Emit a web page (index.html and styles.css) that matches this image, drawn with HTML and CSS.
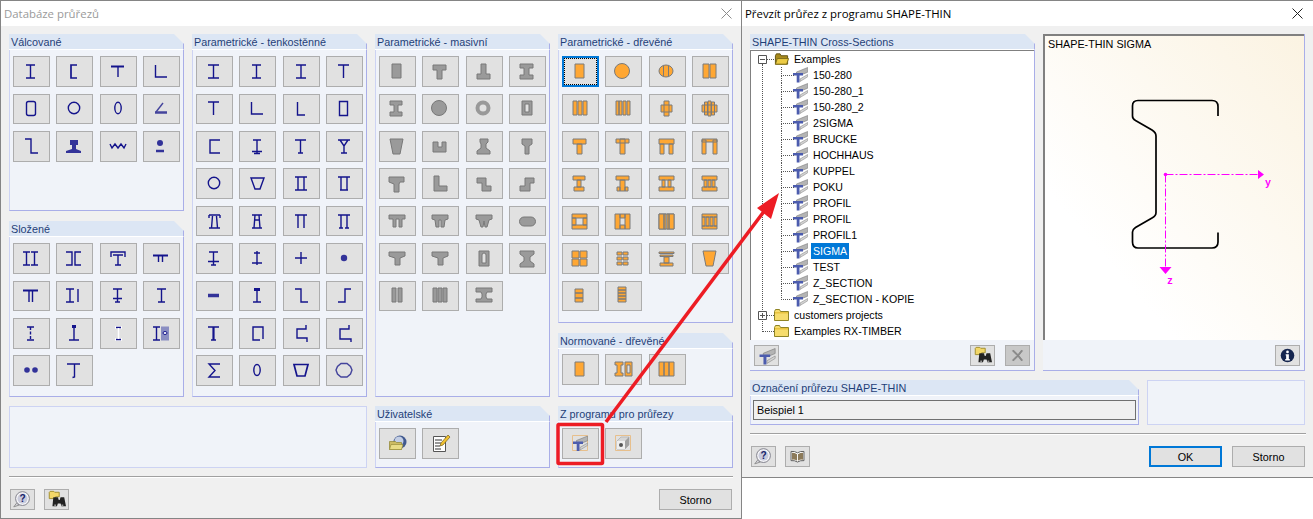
FILE: index.html
```html
<!DOCTYPE html>
<html>
<head>
<meta charset="UTF-8">
<title>Databáze průřezů</title>
<link rel="stylesheet" href="styles.css">
</head>
<body>
<svg class="sprite">
  <symbol id="sec" viewBox="0 0 15 16">
    <path fill="#b4b4b4" stroke="#7c7c7c" stroke-width=".6" d="M3.500 5 14.700.5v4.700L9 7.500H3.500z"/>
    <path fill="#d4d4d4" stroke="#8c8c8c" stroke-width=".6" d="M7 12l7.700-4.500v2.300L7 14.500z"/>
    <path fill="#4c5cae" d="M0 6h10v2.400H6.500V15.500H3.700V8.400H0z"/>
  </symbol>
  <symbol id="folder" viewBox="0 0 15 12">
    <path fill="#f6dc6c" stroke="#8f8426" d="M.5 2.500l1-2h4l1 2h8v9H.5z"/>
    <path fill="#e8c23e" d="M1 3h13v1.500H1z"/>
  </symbol>
  <symbol id="folder-open" viewBox="0 0 16 12">
    <path fill="#a88a1c" stroke="#5f5010" d="M1.500 11.500v-9l1-2h4l1 2h7v9z"/>
    <path fill="#eccb44" stroke="#7d6c18" d="M1.500 11.500l2-6h12l-2 6z"/>
  </symbol>
  <symbol id="help" viewBox="0 0 25 20">
    <path fill="#d8d8e0" stroke="#8a8a8a" d="M6 14 3 18l6-2z"/>
    <circle cx="12.500" cy="9" r="7.500" fill="#f6f6f8" stroke="#7a7a86"/>
    <circle cx="12.500" cy="9" r="5.500" fill="#c9cbdc"/>
    <text x="12.500" y="13" text-anchor="middle" class="help-mark">?</text>
  </symbol>
  <symbol id="find" viewBox="0 0 25 21">
    <path fill="#f3d768" stroke="#9c8a28" d="M4.500 9.500v-7l1-1h4l1 1h5v5h-4v2z"/>
    <path fill="#222" d="M9 8h5l1 3h1l1-3h4l2 10h-5l-1-3h-3l-1 3H8z"/>
    <path fill="#999" d="M10 16h2v2h-2zm8 0h2v2h-2z"/>
  </symbol>
</svg>

<div class="desk">

<div class="dialog db-dialog">
  <div class="titlebar muted"><span>Databáze průřezů</span><svg class="close" viewBox="0 0 11 11"><path d="M.5.5l10 10M10.500.5l-10 10"/></svg></div>
  <div class="upper">
    <div class="col">
      <section class="panel rolled">
        <h3>Válcované</h3>
        <div class="body tools steel">
          <button class="tool"><svg viewBox="0 0 37 31"><path d="M13 9h9M17.500 9v13M13 22h9"/></svg></button>
          <button class="tool"><svg viewBox="0 0 37 31"><path d="M21 9h-6v13h6" stroke-width="1.700"/></svg></button>
          <button class="tool"><svg viewBox="0 0 37 31"><path d="M11 10.500h13" stroke-width="2"/><path d="M18 10v11"/></svg></button>
          <button class="tool"><svg viewBox="0 0 37 31"><path d="M12.500 9v12H24"/></svg></button>
          <button class="tool"><svg viewBox="0 0 37 31"><rect x="13.500" y="8.500" width="9" height="14" rx="2"/></svg></button>
          <button class="tool"><svg viewBox="0 0 37 31"><circle cx="18" cy="15" r="5.700"/></svg></button>
          <button class="tool"><svg viewBox="0 0 37 31"><ellipse cx="18" cy="15" rx="3.200" ry="5.700"/></svg></button>
          <button class="tool"><svg viewBox="0 0 37 31"><path d="M12 19.500h12" stroke="#44449c" stroke-width="2.500"/><path d="M13 19l7-9" stroke="#44449c"/></svg></button>
          <button class="tool"><svg viewBox="0 0 37 31"><path d="M12 8h6v14h7"/></svg></button>
          <button class="tool"><svg viewBox="0 0 37 31"><path class="fill" d="M14 9h8v5h-2v4l5 2v2H10v-2l6-2v-4h-2z"/></svg></button>
          <button class="tool"><svg viewBox="0 0 37 31"><path d="M10 13l2 4 3-4 3 4 3-4 3 4 2-4"/></svg></button>
          <button class="tool"><svg viewBox="0 0 37 31"><circle class="fill" cx="17" cy="12" r="3"/><path d="M13 20h8" stroke="#333399" stroke-width="2.500"/></svg></button>
        </div>
      </section>
      <section class="panel composed">
        <h3>Složené</h3>
        <div class="body tools steel">
          <button class="tool"><svg viewBox="0 0 37 31"><path d="M10 9h7M13.500 9v13M10 22h7M18 9h7M21.500 9v13M18 22h7"/></svg></button>
          <button class="tool"><svg viewBox="0 0 37 31"><path d="M10 9h6v13h-6M25 9h-6v13h6"/></svg></button>
          <button class="tool"><svg viewBox="0 0 37 31"><path d="M11 14V9h14v5M13 12h10M18 12v10M15 22h6"/></svg></button>
          <button class="tool"><svg viewBox="0 0 37 31"><path d="M10 12.500h15" stroke-width="2"/><path d="M15.500 12v7M19.500 12v7"/></svg></button>
          <button class="tool"><svg viewBox="0 0 37 31"><path d="M10 10.500h15" stroke-width="2"/><path d="M16 10v12M19.500 10v12"/></svg></button>
          <button class="tool"><svg viewBox="0 0 37 31"><path d="M10 9h8M14 9v13M10 22h8M22 9v13"/></svg></button>
          <button class="tool"><svg viewBox="0 0 37 31"><path d="M13 9h9M17.500 9v13M13 18.500h9M15 22h5"/></svg></button>
          <button class="tool"><svg viewBox="0 0 37 31"><path d="M14 9h9M18.500 9v13M15 22h7"/></svg></button>
          <button class="tool"><svg viewBox="0 0 37 31"><path d="M14 9h7M14 22h7"/><path d="M17.500 9v13" stroke-dasharray="3 1.500"/></svg></button>
          <button class="tool"><svg viewBox="0 0 37 31"><path d="M16 8.500h4" stroke-width="3"/><path d="M18 9v13M13 22h10"/></svg></button>
          <button class="tool"><svg viewBox="0 0 37 31"><path d="M15 9.500h7M15 21.500h7" stroke="#fff" stroke-width="2.500"/><path d="M16 21.500h5M16 9.500h5"/><path d="M18.500 10v11" stroke="#fff" stroke-width="1.500"/></svg></button>
          <button class="tool"><svg viewBox="0 0 37 31"><path d="M10 9h7M10 22h7M13.500 9v13"/><rect x="18" y="8.500" width="8" height="14" fill="#8a8ec2" stroke="none"/><ellipse cx="22" cy="15" rx="2" ry="1.500" fill="#fff" stroke-width="1"/></svg></button>
          <button class="tool"><svg viewBox="0 0 37 31"><circle class="fill" cx="14" cy="15" r="2.800"/><circle class="fill" cx="22" cy="15" r="2.800"/></svg></button>
          <button class="tool"><svg viewBox="0 0 37 31"><path d="M11 9h13M18.500 9v13l-2 .5"/></svg></button>
        </div>
      </section>
    </div>

    <section class="panel full">
      <h3>Parametrické - tenkostěnné</h3>
      <div class="body tools steel">
        <button class="tool"><svg viewBox="0 0 37 31"><path d="M12 9h11M17.500 9v13M12 22h11"/></svg></button>
        <button class="tool"><svg viewBox="0 0 37 31"><path d="M13 9h9M17.500 9v13M13 22h9"/></svg></button>
        <button class="tool"><svg viewBox="0 0 37 31"><path d="M13 9h10M18 9v13M13 22h10"/></svg></button>
        <button class="tool"><svg viewBox="0 0 37 31"><path d="M12 9h11M17.500 9v13"/></svg></button>
        <button class="tool"><svg viewBox="0 0 37 31"><path d="M12 9h11M17.500 9v13"/></svg></button>
        <button class="tool"><svg viewBox="0 0 37 31"><path d="M12.500 9v12H24"/></svg></button>
        <button class="tool"><svg viewBox="0 0 37 31"><path d="M14.500 9v13H22"/></svg></button>
        <button class="tool"><svg viewBox="0 0 37 31"><path d="M13.500 8.500h8v14h-8z"/></svg></button>
        <button class="tool"><svg viewBox="0 0 37 31"><path d="M24 9H14v13h10"/></svg></button>
        <button class="tool"><svg viewBox="0 0 37 31"><path d="M14 9h8M18 9v13M13 20.500h10M15 22.500h6"/></svg></button>
        <button class="tool"><svg viewBox="0 0 37 31"><path d="M12 9h11M17.500 9v13M15 22h5"/></svg></button>
        <button class="tool"><svg viewBox="0 0 37 31"><path d="M12 9h12M14 9l4 6 4-6M18 15v7M15 22h6"/></svg></button>
        <button class="tool"><svg viewBox="0 0 37 31"><circle cx="18" cy="15" r="5.700"/></svg></button>
        <button class="tool"><svg viewBox="0 0 37 31"><path d="M12 10h13l-4 11h-5z"/></svg></button>
        <button class="tool"><svg viewBox="0 0 37 31"><path d="M12 9h12M12 22h12M15 9v13M21 9v13"/></svg></button>
        <button class="tool"><svg viewBox="0 0 37 31"><path d="M12 9h12M14 22h8M15 9v13M21 9v13"/></svg></button>
        <button class="tool"><svg viewBox="0 0 37 31"><path d="M13 9h11M13 22h11M15.500 22l1-12M21.500 22l-1-12M13 9v3M24 9v3"/></svg></button>
        <button class="tool"><svg viewBox="0 0 37 31"><path d="M13 9h10M13 22h10M15 22l1-13M21 22l-1-13M15 14h6"/></svg></button>
        <button class="tool"><svg viewBox="0 0 37 31"><path d="M12 9h12M15 9v13M21 9v13"/></svg></button>
        <button class="tool"><svg viewBox="0 0 37 31"><path d="M12 9h12M15 9v13M21 9v13M13 22h4M19 22h4"/></svg></button>
        <button class="tool"><svg viewBox="0 0 37 31"><path d="M13 9h9M17.500 9v13M12 18.500h11M15 22h5"/></svg></button>
        <button class="tool"><svg viewBox="0 0 37 31"><path d="M15 10h6M18 8v14M13 20h10"/></svg></button>
        <button class="tool"><svg viewBox="0 0 37 31"><path d="M12 15h12M18 9v12"/></svg></button>
        <button class="tool"><svg viewBox="0 0 37 31"><circle class="fill" cx="18" cy="15" r="3.200"/></svg></button>
        <button class="tool"><svg viewBox="0 0 37 31"><path d="M12 15.500h11" stroke="#333399" stroke-width="3.500"/></svg></button>
        <button class="tool"><svg viewBox="0 0 37 31"><path d="M15 9.500h6" stroke-width="3"/><path d="M18 9v13M14 22h8"/></svg></button>
        <button class="tool"><svg viewBox="0 0 37 31"><path d="M12 9h6v13h7"/></svg></button>
        <button class="tool"><svg viewBox="0 0 37 31"><path d="M12 22h7V9h6"/></svg></button>
        <button class="tool"><svg viewBox="0 0 37 31"><path d="M12 9h11M15 22h5"/><path d="M17.500 9v13" stroke-width="2.200"/></svg></button>
        <button class="tool"><svg viewBox="0 0 37 31"><path d="M21 22h-7V9h10v12"/></svg></button>
        <button class="tool"><svg viewBox="0 0 37 31"><path d="M23 7v4h-9v9h10v4"/></svg></button>
        <button class="tool"><svg viewBox="0 0 37 31"><path d="M23 7v4h-9v10h11v3"/></svg></button>
        <button class="tool"><svg viewBox="0 0 37 31"><path d="M24 9H13l6 6.500-6 6.500h11"/></svg></button>
        <button class="tool"><svg viewBox="0 0 37 31"><ellipse cx="18" cy="15" rx="3.200" ry="5.500"/></svg></button>
        <button class="tool"><svg viewBox="0 0 37 31"><path d="M11 9.500h14l-3 11.500h-8z" stroke-width="1.700"/></svg></button>
        <button class="tool"><svg viewBox="0 0 37 31"><path d="M15 8.500h6l3.500 3 1.500 3.500-1.500 4-3.500 3h-6l-3.500-3L10 15l1.500-3.500z" stroke="#44449c"/></svg></button>
      </div>
    </section>

    <section class="panel full">
      <h3>Parametrické - masivní</h3>
      <div class="body tools concrete">
        <button class="tool"><svg viewBox="0 0 37 31"><path d="M13 8h9v14h-9z"/></svg></button>
        <button class="tool"><svg viewBox="0 0 37 31"><path d="M11 9h13v5h-4v9h-5v-9h-4z"/></svg></button>
        <button class="tool"><svg viewBox="0 0 37 31"><path d="M15 8h5v10h4v5H11v-5h4z"/></svg></button>
        <button class="tool"><svg viewBox="0 0 37 31"><path d="M11 8h13v4h-4v7h4v4H11v-4h4v-7h-4z"/></svg></button>
        <button class="tool"><svg viewBox="0 0 37 31"><path d="M11 8h12v4h-4v7h4v4H11v-4h4v-7h-4z"/></svg></button>
        <button class="tool"><svg viewBox="0 0 37 31"><circle cx="17" cy="15" r="7.500"/></svg></button>
        <button class="tool"><svg viewBox="0 0 37 31"><circle cx="17" cy="15" r="5.500" fill="none" stroke="#999" stroke-width="4"/></svg></button>
        <button class="tool"><svg viewBox="0 0 37 31"><path fill-rule="evenodd" d="M13 8h10v14H13zm3 3v8h4v-8z"/></svg></button>
        <button class="tool"><svg viewBox="0 0 37 31"><path d="M11 8h13l-3 15h-7z"/></svg></button>
        <button class="tool"><svg viewBox="0 0 37 31"><path d="M11 11h5v5h4v-5h4v10H11z"/></svg></button>
        <button class="tool"><svg viewBox="0 0 37 31"><path d="M14 8h8v3l-2 2v4l4 3v3H11v-3l4-3v-4l-1-2z"/></svg></button>
        <button class="tool"><svg viewBox="0 0 37 31"><path d="M13 8h10v5l-3 2v8h-4v-8l-3-2z"/></svg></button>
        <button class="tool"><svg viewBox="0 0 37 31"><path d="M10 9h15v5h-4l-1 2v8h-5v-8l-5-2z"/></svg></button>
        <button class="tool"><svg viewBox="0 0 37 31"><path d="M12 8h5v10h8v5H12z"/></svg></button>
        <button class="tool"><svg viewBox="0 0 37 31"><path d="M11 10h9v8h5v5h-9v-8h-5z"/></svg></button>
        <button class="tool"><svg viewBox="0 0 37 31"><path d="M11 23v-5h5v-8h9v5h-4v8z"/></svg></button>
        <button class="tool"><svg viewBox="0 0 37 31"><path d="M10 9h16v4h-3v8h-3v-8h-3v8h-3v-8h-4z"/></svg></button>
        <button class="tool"><svg viewBox="0 0 37 31"><path d="M10 9h16v4l-3 1-1 7h-3v-7h-2v7h-3l-1-7-3-1z"/></svg></button>
        <button class="tool"><svg viewBox="0 0 37 31"><path d="M10 9h16v4l-3 1-2 7h-2l-1-6-1 6h-2l-2-7-3-1z"/></svg></button>
        <button class="tool"><svg viewBox="0 0 37 31"><rect x="10.500" y="11" width="16" height="9" rx="4.500"/></svg></button>
        <button class="tool"><svg viewBox="0 0 37 31"><path d="M10 9h16v4l-5 2v7h-5v-7l-6-2z"/></svg></button>
        <button class="tool"><svg viewBox="0 0 37 31"><path d="M10 9h16v4l-5 2v7h-5v-7l-6-2z"/></svg></button>
        <button class="tool"><svg viewBox="0 0 37 31"><path fill-rule="evenodd" d="M13 8h10v15H13zm3 4v8h4v-8a2 2 0 0 0-4 0z"/></svg></button>
        <button class="tool"><svg viewBox="0 0 37 31"><path d="M11 8h14v3l-4 3v4l4 3v3H11v-3l4-3v-4l-4-3z"/></svg></button>
        <button class="tool"><svg viewBox="0 0 37 31"><path d="M13 8h4v14h-4zM19 8h4v14h-4z"/></svg></button>
        <button class="tool"><svg viewBox="0 0 37 31"><path d="M11 8h4v14h-4zM16 8h4v14h-4zM21 8h4v14h-4z"/></svg></button>
        <button class="tool"><svg viewBox="0 0 37 31"><path d="M10 8h16v4h-5l-1 2v3l1 2h5v3H10v-3h5l1-2v-3l-1-2h-5z"/></svg></button>
      </div>
    </section>

    <div class="col">
      <section class="panel timber-panel">
        <h3>Parametrické - dřevěné</h3>
        <div class="body tools timber">
          <button class="tool focus"><svg viewBox="0 0 37 31"><path d="M13 8h9v14h-9z"/></svg></button>
          <button class="tool"><svg viewBox="0 0 37 31"><circle cx="17" cy="15" r="7.500"/></svg></button>
          <button class="tool"><svg viewBox="0 0 37 31"><ellipse cx="17" cy="15" rx="7" ry="6"/><path d="M14.500 9.500v11M19.500 9.500v11"/></svg></button>
          <button class="tool"><svg viewBox="0 0 37 31"><path d="M11 8h6v14h-6zM18 8h6v14h-6z"/></svg></button>
          <button class="tool"><svg viewBox="0 0 37 31"><path d="M11 8h4v14h-4zM16 8h4v14h-4zM21 8h4v14h-4z"/></svg></button>
          <button class="tool"><svg viewBox="0 0 37 31"><path d="M11 8h3v14h-3zM14 8h3v14h-3zM18 8h3v14h-3zM22 8h3v14h-3z"/></svg></button>
          <button class="tool"><svg viewBox="0 0 37 31"><path d="M12 12h11v7H12zM15 8h5v15h-5z"/></svg></button>
          <button class="tool"><svg viewBox="0 0 37 31"><path d="M10 12h15v7H10zM12.500 9h3v13h-3zM19.500 9h3v13h-3zM16 8h3v15h-3z"/></svg></button>
          <button class="tool"><svg viewBox="0 0 37 31"><path d="M11 8h13v5H11zM15 13h5v10h-5z"/></svg></button>
          <button class="tool"><svg viewBox="0 0 37 31"><path d="M11 8h13v4H11zM15 8h5v15h-5z"/></svg></button>
          <button class="tool"><svg viewBox="0 0 37 31"><path d="M10 8h15v5H10zM11 13h4v10h-4zM20 13h4v10h-4z"/></svg></button>
          <button class="tool"><svg viewBox="0 0 37 31"><path d="M10 9h4v14h-4zM21 9h4v14h-4zM10 8h15v3H10z"/></svg></button>
          <button class="tool"><svg viewBox="0 0 37 31"><path d="M11 8h12v4H11zM15 12h4v7h-4zM12 19h10v4H12z"/></svg></button>
          <button class="tool"><svg viewBox="0 0 37 31"><path d="M11 8h13v4H11zM15 12h5v11h-5zM12 19h3v4h-3zM20 19h3v4h-3z"/></svg></button>
          <button class="tool"><svg viewBox="0 0 37 31"><path d="M10 8h15v4H10zM13 12h3v7h-3zM19 12h3v7h-3zM10 19h15v4H10z"/></svg></button>
          <button class="tool"><svg viewBox="0 0 37 31"><path d="M10 8h15v4H10zM12 12h3v7h-3zM16 12h3v7h-3zM20 12h3v7h-3zM10 19h15v4H10z"/></svg></button>
          <button class="tool"><svg viewBox="0 0 37 31"><path d="M10 8h15v4H10zM10 12h4v7h-4zM21 12h4v7h-4zM10 19h15v4H10z"/></svg></button>
          <button class="tool"><svg viewBox="0 0 37 31"><path d="M10 8h5v15h-5zM20 8h5v15h-5zM15 8h5v4h-5zM15 19h5v4h-5z"/></svg></button>
          <button class="tool"><svg viewBox="0 0 37 31"><path d="M10 8h15v15H10z" fill="none"/><path d="M10 8h5v15h-5zM15 8h2v15h-2zM18 8h2v15h-2zM20 8h5v15h-5z"/></svg></button>
          <button class="tool"><svg viewBox="0 0 37 31"><path d="M10 8h15v3H10zM10 20h15v3H10zM10 11h3v9h-3zM14 11h3v9h-3zM18 11h3v9h-3zM22 11h3v9h-3z" /></svg></button>
          <button class="tool"><svg viewBox="0 0 37 31"><path d="M10 8h7v7h-7zM18 8h7v7h-7zM10 16h7v7h-7zM18 16h7v7h-7z"/></svg></button>
          <button class="tool"><svg viewBox="0 0 37 31"><path d="M12 9h5v3h-5zM18 9h5v3h-5zM12 14h5v3h-5zM18 14h5v3h-5zM12 19h5v3h-5zM18 19h5v3h-5z"/></svg></button>
          <button class="tool"><svg viewBox="0 0 37 31"><path d="M10 9h15v1.500H10zM11 12h13v1.500H11zM15 14h5v6h-5zM11 20h13v3H11z"/></svg></button>
          <button class="tool"><svg viewBox="0 0 37 31"><path d="M11 8h13l-3 15h-7z"/></svg></button>
          <button class="tool"><svg viewBox="0 0 37 31"><path d="M13 9h8v4h-8zM13 13h8v5h-8zM13 18h8v4h-8z"/></svg></button>
          <button class="tool"><svg viewBox="0 0 37 31"><path d="M13 7h8v3h-8zM13 10h8v3h-8zM13 13h8v3h-8zM13 16h8v3h-8zM13 19h8v3h-8z"/></svg></button>
        </div>
      </section>
      <section class="panel norm-panel">
        <h3>Normované - dřevěné</h3>
        <div class="body tools timber">
          <button class="tool"><svg viewBox="0 0 37 31"><path d="M13 8h9v14h-9z"/></svg></button>
          <button class="tool"><svg viewBox="0 0 37 31"><path d="M10 8h8v3h-2v8h2v3h-8v-3h2v-8h-2zM20 8h7v14h-7z"/><path class="hole" d="M22 11h3v8h-3z"/></svg></button>
          <button class="tool"><svg viewBox="0 0 37 31"><path d="M10 8h5v14h-5zM15 8h5v14h-5zM20 8h5v14h-5z"/></svg></button>
        </div>
      </section>
    </div>
  </div>

  <div class="lower">
    <section class="panel blank wide-blank"></section>
    <section class="panel short">
      <h3>Uživatelské</h3>
      <div class="body tools">
        <button class="tool"><svg viewBox="0 0 37 31"><circle cx="21" cy="14" r="6.500" fill="#41598f"/><circle cx="20" cy="13" r="4.500" fill="#c3cee4"/><path fill="#cdbb62" stroke="#8e8430" stroke-width=".7" d="M10.500 13.500h6l1 1h5v7h-12z"/><path fill="#e9dc86" stroke="#9a8f3c" stroke-width=".7" d="M10.500 21.500l1.500-5h12l-1.500 5z"/></svg></button>
        <button class="tool"><svg viewBox="0 0 37 31"><path fill="#fff" stroke="#555" d="M11.500 8.500h12v15h-12z"/><path stroke="#333" d="M13 12h7M13 15h6M13 18h5M13 21h6"/><path fill="#f2c230" stroke="#77601a" stroke-width=".7" d="M26 7l2 2-7 8-3 1 1-3z"/></svg></button>
      </div>
    </section>
    <section class="panel short">
      <h3>Z programu pro průřezy</h3>
      <div class="body tools">
        <button class="tool"><svg viewBox="0 0 37 31"><path fill="none" stroke="#e7bf8c" d="M10.500 7.500h15v15h-15z"/><use href="#sec" x="11" y="7.500" width="15" height="16"/></svg></button>
        <button class="tool"><svg viewBox="0 0 37 31"><path fill="none" stroke="#e7bf8c" d="M10.500 7.500h15v15h-15z"/><path fill="#d6d6d6" stroke="#999" stroke-width=".5" d="M12 13l4-4h8v8l-4 4h-8z"/><path fill="#a0a0a0" d="M20 13l4-4v8l-4 4z"/><path fill="#efefef" d="M12 13h8v8h-8z"/><circle cx="16" cy="17" r="2" fill="#555"/></svg></button>
      </div>
    </section>
  </div>

  <div class="rule"></div>
  <div class="foot">
    <button class="small"><svg><use href="#help"/></svg></button>
    <button class="small find-btn"><svg><use href="#find"/></svg></button>
    <button class="cmd push">Storno</button>
  </div>
</div>

<div class="dialog take-dialog">
  <div class="titlebar"><span>Převzít průřez z programu SHAPE-THIN</span><svg class="close dark" viewBox="0 0 11 11"><path d="M.5.5l10 10M10.500.5l-10 10"/></svg></div>
  <div class="split">
    <section class="panel tree-panel">
      <h3>SHAPE-THIN Cross-Sections</h3>
      <div class="body tree-body">
        <div class="tree">
          <div class="row root"><svg class="exp" viewBox="0 0 9 9"><path d="M.5.5h8v8h-8zM2 4.500h5"/></svg><i class="stub"></i><svg class="fold"><use href="#folder-open"/></svg><span>Examples</span></div>
          <div class="row leaf"><svg class="beam"><use href="#sec"/></svg><span>150-280</span></div>
          <div class="row leaf"><svg class="beam"><use href="#sec"/></svg><span>150-280_1</span></div>
          <div class="row leaf"><svg class="beam"><use href="#sec"/></svg><span>150-280_2</span></div>
          <div class="row leaf"><svg class="beam"><use href="#sec"/></svg><span>2SIGMA</span></div>
          <div class="row leaf"><svg class="beam"><use href="#sec"/></svg><span>BRUCKE</span></div>
          <div class="row leaf"><svg class="beam"><use href="#sec"/></svg><span>HOCHHAUS</span></div>
          <div class="row leaf"><svg class="beam"><use href="#sec"/></svg><span>KUPPEL</span></div>
          <div class="row leaf"><svg class="beam"><use href="#sec"/></svg><span>POKU</span></div>
          <div class="row leaf"><svg class="beam"><use href="#sec"/></svg><span>PROFIL</span></div>
          <div class="row leaf"><svg class="beam"><use href="#sec"/></svg><span>PROFIL</span></div>
          <div class="row leaf"><svg class="beam"><use href="#sec"/></svg><span>PROFIL1</span></div>
          <div class="row leaf"><svg class="beam"><use href="#sec"/></svg><span class="picked">SIGMA</span></div>
          <div class="row leaf"><svg class="beam"><use href="#sec"/></svg><span>TEST</span></div>
          <div class="row leaf"><svg class="beam"><use href="#sec"/></svg><span>Z_SECTION</span></div>
          <div class="row leaf last"><svg class="beam"><use href="#sec"/></svg><span>Z_SECTION - KOPIE</span></div>
          <div class="row root"><svg class="exp" viewBox="0 0 9 9"><path d="M.5.5h8v8h-8zM2 4.500h5M4.500 2v5"/></svg><i class="stub"></i><svg class="fold"><use href="#folder"/></svg><span>customers projects</span></div>
          <div class="row root end"><i class="stub"></i><svg class="fold"><use href="#folder"/></svg><span>Examples RX-TIMBER</span></div>
        </div>
        <div class="bar">
          <button class="small"><svg><use href="#sec" x="4" y="2" width="17" height="17"/></svg></button>
          <button class="small find-btn push"><svg><use href="#find"/></svg></button>
          <button class="small off"><svg viewBox="0 0 25 20"><path d="M8 4l5 5 4-5 1 1-4 5 4 5-1 1-4-5-5 5-1-1 5-5-5-5z" fill="#8f8f8f" stroke="#777" stroke-width=".6"/></svg></button>
        </div>
      </div>
    </section>
    <section class="preview">
      <div class="canvas">
        <span class="cap">SHAPE-THIN SIGMA</span>
        <svg class="drawing" viewBox="1045 36 259 304">
          <path class="sigma" d="M1218 116v-9.500q0-6-6-6h-74q-5.500 0-5.500 5.500v10q0 3 3 4.500l16.500 9.500q4 2.500 4 6v76.500q0 3.500-4 5.500l-16.500 9.500q-3 2-3 4.500v10q0 6 5.500 6h74q6 0 6-6v-9.500"/>
          <path class="axis" d="M1165.500 174.500H1259M1165.500 174.500V268"/>
          <circle cx="1165.500" cy="174.500" r="1.800" fill="#f0f"/>
          <path fill="#f0f" d="M1258 170l6 4.500-6 4.500zM1159.500 267h12l-6 7z"/>
          <text class="axis-name" x="1265" y="186">y</text>
          <text class="axis-name" x="1167" y="284">z</text>
        </svg>
      </div>
      <div class="bar">
        <button class="small info push"><svg viewBox="0 0 25 21"><circle cx="12.500" cy="10.500" r="7.500" fill="#16264f"/><circle cx="12.500" cy="6.500" r="1.500" fill="#fff"/><path fill="#fff" d="M10.500 9h3.500v5.500h1V16h-5v-1.500h1V10.500h-.5z"/></svg></button>
      </div>
    </section>
  </div>
  <div class="names">
    <section class="panel name-panel">
      <h3>Označení průřezu SHAPE-THIN</h3>
      <div class="body name-body"><div class="field">Beispiel 1</div></div>
    </section>
    <section class="panel blank side-blank"></section>
  </div>
  <div class="rule"></div>
  <div class="foot">
    <button class="small"><svg><use href="#help"/></svg></button>
    <button class="small"><svg viewBox="0 0 25 20"><path fill="#fff" stroke="#555" d="M12.500 6q-3-2-7-1.500v10q4-.5 7 1.500 3-2 7-1.500v-10q-4-.5-7 1.500z"/><path fill="#8c7a5a" d="M6.500 6q3 0 5.500 1.500v7q-2.500-1.500-5.500-1zM18.500 6q-3 0-5.500 1.500v7q2.500-1.500 5.500-1z"/></svg></button>
    <button class="cmd default push">OK</button>
    <button class="cmd">Storno</button>
  </div>
</div>

</div>

<svg class="callout" viewBox="0 0 1313 519">
  <rect x="558" y="424.500" width="44.500" height="39" rx="1"/>
  <path d="M606 422 768 206"/>
  <path class="tip" d="M779 193 757 208 771 219z"/>
</svg>
</body>
</html>
```

FILE: styles.css
```css
* { box-sizing: border-box; }

html, body {
    margin: 0;
    background: #fff;
}

body {
    width: 1313px;
    height: 519px;
    overflow: hidden;
    position: relative;
    font-family: "Liberation Sans", Arial, sans-serif;
    font-size: 10.8px;
    color: #000;
}

.sprite { display: none; }
.desk { display: flex; align-items: flex-start; }

.dialog {
    background: #f0f0f0;
    border: 1px solid #858585;
    flex-shrink: 0;
    padding: 0 8px;
}
.db-dialog { width: 742px; height: 519px; }
.take-dialog {
    width: 573px;
    height: 478px;
    margin-left: -1px;
    border-right: 0;
}

.titlebar {
    background: #fff;
    height: 25px;
    margin: 0 -8px 8px;
    padding: 0 9px 0 3px;
    display: flex;
    align-items: center;
    justify-content: space-between;
    font-family: "Open Sans", sans-serif;
    font-size: 11.4px;
}
.take-dialog .titlebar { padding-right: 11px; }
.muted { color: #9a9a9a; }
.close { width: 11px; height: 11px; fill: none; stroke: #8c8c8c; stroke-width: 1; }
.close.dark { stroke: #222; }

/* panels */
.panel { display: flex; flex-direction: column; }
.panel h3 {
    margin: 0;
    height: 16px;
    padding: 1px 0 0 2px;
    background: #dce6f4;
    border-right: 1px solid #a9aee8;
    border-bottom: 1px solid #fff;
    clip-path: polygon(0 0, calc(100% - 10px) 0, 100% 10px, 100% 100%, 0 100%);
    font-size: 10.8px;
    font-weight: normal;
    line-height: 14px;
    color: #1f3f78;
}
.body {
    flex: 1;
    background: #f0f3f9;
    border-left: 1px solid #cdd3f3;
    border-right: 1px solid #a9aee8;
    border-bottom: 1px solid #a9aee8;
}
.blank {
    background: #f0f3f9;
    border: 1px solid #cdd3f3;
}

.upper { display: flex; gap: 8px; height: 363px; }
.col { display: flex; flex-direction: column; width: 175px; }
.full { width: 175px; }
.rolled { height: 177px; }
.composed { height: 176px; margin-top: 10px; }
.timber-panel { height: 289px; }
.norm-panel { height: 64px; margin-top: 10px; }
.norm-panel .tools { padding-top: 5px; }

.lower { display: flex; gap: 8px; height: 62px; margin-top: 9px; }
.wide-blank { width: 358px; }
.short { width: 175px; }

.tools {
    display: grid;
    grid-template-columns: repeat(4, 37px);
    grid-auto-rows: 30.6px;
    gap: 6.8px 6.4px;
    padding: 6.2px 0 0 3px;
}

button {
    margin: 0;
    padding: 0;
    font-family: inherit;
    font-size: inherit;
    background: #e1e1e1;
    border: 1px solid #adadad;
}
.tool {
    position: relative;
    display: flex;
    align-items: center;
    justify-content: center;
}
.tool svg { width: 37px; height: 31px; flex-shrink: 0; display: block; }
.tool.focus { border: 2px solid #0078d7; }
.tool.focus::after {
    content: "";
    position: absolute;
    inset: 0;
    border: 1px dotted #000;
}

.steel svg { fill: none; stroke: #14148c; stroke-width: 1.4; }
.steel .fill { fill: #333399; stroke: none; }
.concrete svg { fill: #9a9a9a; stroke: #787878; stroke-width: 1; }
.timber svg { fill: #ffa733; stroke: #7a7a7a; stroke-width: 1; }
.timber .hole { fill: #e1e1e1; }

.rule {
    height: 2px;
    margin-top: 8px;
    border-top: 1px solid #a0a0a0;
    border-bottom: 1px solid #fff;
}
.foot { display: flex; align-items: center; gap: 9px; margin: 11px 1px 0; }
.push { margin-left: auto; }

.small { width: 25px; height: 21px; flex-shrink: 0; }
.small svg { width: 23px; height: 19px; display: block; }
.help-mark { font-size: 11px; font-weight: bold; fill: #16226a; }
.off { background: #c8c8c8; }

.cmd { width: 73px; height: 21px; }
.cmd + .cmd { margin-left: 1px; }
.default { border: 2px solid #0078d7; }

/* right dialog */
.split { display: flex; gap: 8px; height: 337px; }
.tree-panel { width: 285px; }
.tree-body { display: flex; flex-direction: column; border-left: 0; }

.tree {
    position: relative;
    flex: 1;
    background: #fff;
    border-top: 1px solid #808080;
    border-left: 1px solid #808080;
    font-size: 10.6px;
}
.tree::before {
    content: "";
    position: absolute;
    left: 11px;
    top: 13px;
    height: 266px;
    border-left: 1px dotted #555;
}
.row {
    position: relative;
    display: flex;
    align-items: center;
    height: 16px;
}
.row.root { padding-left: 7px; }
.row.end { padding-left: 11px; }
.exp { width: 9px; height: 9px; fill: #fff; stroke: #555; stroke-width: 1; flex-shrink: 0; position: relative; }
.stub { width: 7px; height: 0; border-top: 1px dotted #555; }
.end .stub { width: 12px; }
.fold { width: 15px; height: 12px; margin-right: 5px; flex-shrink: 0; }

.row.leaf { padding-left: 42px; }
.beam { width: 15px; height: 16px; margin-right: 3px; flex-shrink: 0; }
.row span { padding: 0 2px; line-height: 16px; white-space: nowrap; }
.root span { padding: 0; }
.picked { background: #0078d7; color: #fff; }
.leaf::before {
    content: "";
    position: absolute;
    left: 30px;
    top: 0;
    width: 12px;
    height: 8px;
    border-left: 1px dotted #555;
    border-bottom: 1px dotted #555;
}
.leaf::after {
    content: "";
    position: absolute;
    left: 30px;
    top: 8px;
    height: 8px;
    border-left: 1px dotted #555;
}
.leaf.last::after { display: none; }

.bar {
    height: 30px;
    flex-shrink: 0;
    display: flex;
    align-items: center;
    gap: 10px;
    padding: 0 4px;
    background: #f0f3f9;
}

.preview {
    width: 262px;
    display: flex;
    flex-direction: column;
    border-right: 1px solid #a9aee8;
    border-bottom: 1px solid #a9aee8;
}
.canvas {
    position: relative;
    flex: 1;
    border-top: 2px solid #808080;
    border-left: 2px solid #808080;
    background: linear-gradient(to top right, #fff 25%, #fbf3e2);
}
.cap { position: absolute; left: 3px; top: 2px; }
.drawing { display: block; width: 259px; height: 304px; }
.sigma { fill: none; stroke: #000; stroke-width: 1.7; }
.axis { fill: none; stroke: #f0f; stroke-dasharray: 8 2 2 2; }
.axis-name {
    font-family: "Liberation Mono", monospace;
    font-size: 10px;
    font-weight: bold;
    fill: #f0f;
}

.names { display: flex; gap: 8px; height: 45px; margin-top: 9px; }
.name-panel { width: 389px; }
.name-body { padding: 4px 2px 0 2px; }
.field {
    height: 20px;
    background: #f0f0f0;
    border: 1px solid #707070;
    padding: 0 3px;
    line-height: 18px;
}
.side-blank { width: 158px; }

.callout {
    position: absolute;
    left: 0;
    top: 0;
    width: 1313px;
    height: 519px;
    fill: none;
    stroke: #ed1c24;
    stroke-width: 3.5;
    pointer-events: none;
}
.callout .tip { fill: #ed1c24; stroke: none; }
```
